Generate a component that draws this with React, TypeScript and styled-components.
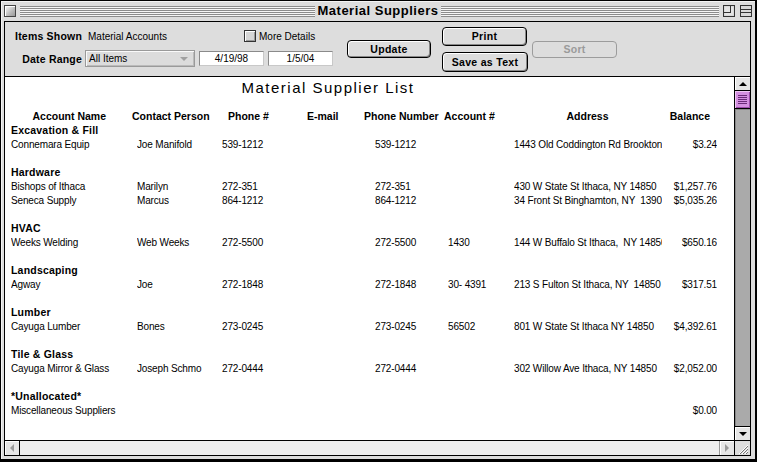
import React from 'react'
import styled, {createGlobalStyle} from 'styled-components'

const GlobalStyle = createGlobalStyle`
  html, body {
    margin: 0;
    padding: 0;
    background: #fff;
  }
  body {
    font-family: "Liberation Sans", Arial, sans-serif;
    color: #000;
  }
`

interface SupplierRow {
  name: string,
  contact: string,
  phone: string,
  email: string,
  phoneNumber: string,
  account: string,
  address: string,
  balance: string
}

interface SupplierGroup {
  title: string,
  rows: SupplierRow[]
}

const row = (name: string, contact: string, phone: string, account: string, address: string, balance: string): SupplierRow =>
  ({name, contact, phone, email: '', phoneNumber: phone, account, address, balance})

const groups: SupplierGroup[] = [
  {title: 'Excavation & Fill', rows: [
    row('Connemara Equip', 'Joe Manifold', '539-1212', '', '1443 Old Coddington Rd Brookton', '$3.24'),
  ]},
  {title: 'Hardware', rows: [
    row('Bishops of Ithaca', 'Marilyn', '272-351', '', '430 W State St Ithaca, NY 14850', '$1,257.76'),
    row('Seneca Supply', 'Marcus', '864-1212', '', '34 Front St Binghamton, NY  13901', '$5,035.26'),
  ]},
  {title: 'HVAC', rows: [
    row('Weeks Welding', 'Web Weeks', '272-5500', '1430', '144 W Buffalo St Ithaca,  NY 14850', '$650.16'),
  ]},
  {title: 'Landscaping', rows: [
    row('Agway', 'Joe', '272-1848', '30- 4391', '213 S Fulton St Ithaca, NY  14850', '$317.51'),
  ]},
  {title: 'Lumber', rows: [
    row('Cayuga Lumber', 'Bones', '273-0245', '56502', '801 W State St Ithaca NY 14850', '$4,392.61'),
  ]},
  {title: 'Tile & Glass', rows: [
    row('Cayuga Mirror & Glass', 'Joseph Schmo', '272-0444', '', '302 Willow Ave Ithaca, NY 14850', '$2,052.00'),
  ]},
  {title: '*Unallocated*', rows: [
    {name: 'Miscellaneous Suppliers', contact: '', phone: '', email: '', phoneNumber: '', account: '', address: '', balance: '$0.00'},
  ]},
]

/* ---------- window frame ---------- */

const Window = styled.div`
  width: 757px;
  height: 462px;
  box-sizing: border-box;
  border: 1px solid #000;
  border-right-width: 2px;
  border-bottom-width: 3px;
  background: #dddddd;
  box-shadow: inset 1px 1px 0 #f4f4f4;
  display: flex;
  flex-direction: column;
`

const TitleBar = styled.div`
  height: 20px;
  flex: none;
  display: grid;
  grid-template-columns: 1fr auto 1fr;
  align-items: center;
  padding: 0 3px;
`

const TitleSide = styled.div`
  display: flex;
  align-items: center;
  gap: 4px;
`

const Stripes = styled.div`
  flex: 1;
  height: 11px;
  background: repeating-linear-gradient(to bottom, #8c8c8c 0 1px, #f6f6f6 1px 2px);
`

const WindowTitle = styled.div`
  padding: 0 3px;
  font-size: 13px;
  font-weight: bold;
  letter-spacing: 0.5px;
  line-height: 20px;
  white-space: nowrap;
`

const CloseBox = styled.div`
  width: 12px;
  height: 12px;
  box-sizing: border-box;
  border: 1px solid #444;
  background: linear-gradient(135deg, #ffffff 0%, #bbbbbb 60%, #999 100%);
  box-shadow: inset 1px 1px 0 #fff;
  flex: none;
`

const TitleIcon = styled.svg`
  flex: none;
  display: block;
`

const Pane = styled.div`
  flex: 1;
  margin: 0 4px 3px 3px;
  border: 1px solid #000;
  display: flex;
  flex-direction: column;
  min-height: 0;
`

/* ---------- toolbar ---------- */

const Toolbar = styled.div`
  height: 54px;
  flex: none;
  border-bottom: 1px solid #000;
  background: #dddddd;
  display: flex;
  align-items: center;
`

const Form = styled.div`
  align-self: flex-start;
  padding-top: 7px;
  display: grid;
  grid-template-columns: 77px auto;
  grid-template-rows: 14px 17px;
  column-gap: 3px;
  row-gap: 7px;
  align-items: center;
`

const FieldLabel = styled.div`
  text-align: right;
  font-size: 10.5px;
  font-weight: bold;
  letter-spacing: 0.2px;
  white-space: nowrap;
`

const FieldLine = styled.div`
  display: flex;
  align-items: center;
  font-size: 10px;
`

const FieldValue = styled.span`
  width: 156px;
  padding-left: 3px;
  white-space: nowrap;
`

const Check = styled.span`
  width: 12px;
  height: 12px;
  box-sizing: border-box;
  border: 1px solid #333;
  background: #d6d6d6;
  box-shadow: inset 1px 1px 0 #fff, inset -1px -1px 0 #999;
  margin-right: 3px;
`

const Popup = styled.div`
  width: 110px;
  height: 17px;
  box-sizing: border-box;
  border: 1px solid #9a9a9a;
  background: #dcdcdc;
  box-shadow: inset 1px 1px 0 #fafafa, inset -1px -1px 0 #bbb;
  display: flex;
  align-items: center;
  justify-content: space-between;
  padding: 0 6px 0 3px;
`

const PopupArrow = styled.span`
  width: 0;
  height: 0;
  border-left: 4px solid transparent;
  border-right: 4px solid transparent;
  border-top: 4px solid #a0a0a0;
`

const DateField = styled.div`
  width: 65px;
  height: 15px;
  box-sizing: border-box;
  margin-left: 4px;
  background: #fff;
  border: 1px solid #8a8a8a;
  border-right-color: #c8c8c8;
  border-bottom-color: #c8c8c8;
  text-align: center;
  line-height: 13px;
`

const ButtonStack = styled.div`
  display: flex;
  flex-direction: column;
  gap: 6px;
  margin-left: 11px;
`

const PushButton = styled.div<{$width: number, $height: number, $gap?: number, $disabled?: boolean}>`
  width: ${p => p.$width}px;
  height: ${p => p.$height}px;
  margin-left: ${p => p.$gap || 0}px;
  box-sizing: border-box;
  border: 1px solid ${p => p.$disabled ? '#9c9c9c' : '#000'};
  border-radius: 4px;
  background: #dddddd;
  box-shadow: ${p => p.$disabled ? 'none' : 'inset 1px 1px 0 #fff, inset -1px -1px 0 #888'};
  color: ${p => p.$disabled ? '#9a9a9a' : '#000'};
  font-size: 10.5px;
  font-weight: bold;
  letter-spacing: 0.3px;
  display: flex;
  align-items: center;
  justify-content: center;
`

/* ---------- report ---------- */

const ContentRow = styled.div`
  flex: 1;
  display: flex;
  min-height: 0;
`

const ScrollView = styled.div`
  flex: 1;
  background: #fff;
  overflow: hidden;
  padding-left: 6px;
`

const ReportTitle = styled.div`
  width: 634px;
  margin-top: 1px;
  margin-bottom: 11px;
  text-align: center;
  font-size: 15px;
  letter-spacing: 1.5px;
  line-height: 20px;
`

const HeaderRow = styled.div`
  display: grid;
  grid-template-columns: 121px 96px 79px 57px 80px 69px 149px 55px;
  height: 14px;
  line-height: 14px;
  font-size: 10.5px;
  font-weight: bold;
  white-space: nowrap;
`

const HeadCell = styled.div<{$align?: 'left' | 'center' | 'right', $pad?: number}>`
  text-align: ${p => p.$align || 'left'};
  padding-right: ${p => p.$pad || 0}px;
`

const GroupTitle = styled.div<{$spaced: boolean}>`
  height: 14px;
  line-height: 14px;
  margin-top: ${p => p.$spaced ? 14 : 0}px;
  font-size: 10.5px;
  font-weight: bold;
  letter-spacing: 0.2px;
  white-space: nowrap;
`

const DataRow = styled.div`
  display: grid;
  grid-template-columns: 126px 85px 153px 73px 66px 148px 55px;
  height: 14px;
  box-sizing: border-box;
  padding-top: 1px;
  line-height: 14px;
  font-size: 10px;
  letter-spacing: -0.15px;
`

const Cell = styled.div<{$right?: boolean}>`
  overflow: hidden;
  white-space: pre;
  text-align: ${p => p.$right ? 'right' : 'left'};
`

/* ---------- scroll bars ---------- */

const VScroll = styled.div`
  width: 15px;
  flex: none;
  border-left: 1px solid #000;
  display: flex;
  flex-direction: column;
  background: #aaaaaa;
`

const ArrowBox = styled.div<{$edge: 'top' | 'bottom' | 'left' | 'right', $dim?: boolean}>`
  flex: none;
  width: ${p => p.$edge === 'top' || p.$edge === 'bottom' ? '15px' : '14px'};
  height: ${p => p.$edge === 'top' || p.$edge === 'bottom' ? '13px' : '14px'};
  background: #e6e6e6;
  box-shadow: inset 1px 1px 0 #fff;
  ${p => p.$edge === 'top' && 'border-bottom: 1px solid #000;'}
  ${p => p.$edge === 'bottom' && 'border-top: 1px solid #000;'}
  ${p => p.$edge === 'left' && 'border-right: 1px solid #000;'}
  ${p => p.$edge === 'right' && 'border-left: 1px solid #999;'}
  display: flex;
  align-items: center;
  justify-content: center;
  color: ${p => p.$dim ? '#9a9a9a' : '#000'};
`

const Thumb = styled.div`
  flex: none;
  height: 17px;
  border-bottom: 1px solid #000;
  background: #d490e0;
  box-shadow: inset 1px 1px 0 #f0c8f4, inset -1px -1px 0 #9a4aa8;
  display: flex;
  align-items: center;
  justify-content: center;
`

const Track = styled.div`
  flex: 1;
  box-shadow: inset 1px 1px 0 #888;
`

const HScroll = styled.div`
  height: 14px;
  flex: none;
  border-top: 1px solid #000;
  display: flex;
  background: #eeeeee;
`

const HTrack = styled.div`
  flex: 1;
`

const GrowBox = styled.div`
  width: 15px;
  flex: none;
  border-left: 1px solid #000;
  background: #dddddd;
  display: flex;
  align-items: center;
  justify-content: center;
`

const Triangle = ({dir}: {dir: 'up' | 'down' | 'left' | 'right'}) => {
  const pts = {
    up: '4,1 8,5 0,5',
    down: '0,1 8,1 4,5',
    left: '5,0 5,8 1,4',
    right: '1,0 1,8 5,4',
  }[dir]
  const vertical = dir === 'up' || dir === 'down'
  return (
    <svg width={vertical ? 8 : 6} height={vertical ? 6 : 8} viewBox={vertical ? '0 0 8 6' : '0 0 6 8'}>
      <polygon points={pts} fill="currentColor" />
    </svg>
  )
}

const App: React.FC = () =>
  <>
    <GlobalStyle />
    <Window>
      <TitleBar>
        <TitleSide>
          <CloseBox />
          <Stripes />
        </TitleSide>
        <WindowTitle>Material Suppliers</WindowTitle>
        <TitleSide>
          <Stripes />
          <TitleIcon width="12" height="12" viewBox="0 0 12 12">
            <rect x="0.5" y="0.5" width="11" height="11" fill="#cfcfcf" stroke="#333" />
            <rect x="1.5" y="1.5" width="9" height="9" fill="#e4e4e4" />
            <rect x="0.5" y="0.5" width="7" height="7" fill="none" stroke="#333" />
          </TitleIcon>
          <TitleIcon width="12" height="12" viewBox="0 0 12 12" style={{marginLeft: 1}}>
            <rect x="0.5" y="0.5" width="11" height="11" fill="#d8d8d8" stroke="#333" />
            <line x1="1" y1="4.5" x2="11" y2="4.5" stroke="#333" />
            <line x1="1" y1="7.5" x2="11" y2="7.5" stroke="#333" />
          </TitleIcon>
        </TitleSide>
      </TitleBar>

      <Pane>
        <Toolbar>
          <Form>
            <FieldLabel>Items Shown</FieldLabel>
            <FieldLine>
              <FieldValue>Material Accounts</FieldValue>
              <Check />
              More Details
            </FieldLine>
            <FieldLabel>Date Range</FieldLabel>
            <FieldLine>
              <Popup>All Items<PopupArrow /></Popup>
              <DateField>4/19/98</DateField>
              <DateField>1/5/04</DateField>
            </FieldLine>
          </Form>
          <PushButton $width={84} $height={18} $gap={14}>Update</PushButton>
          <ButtonStack>
            <PushButton $width={85} $height={19}>Print</PushButton>
            <PushButton $width={86} $height={20}>Save as Text</PushButton>
          </ButtonStack>
          <PushButton $width={85} $height={17} $gap={4} $disabled>Sort</PushButton>
        </Toolbar>

        <ContentRow>
          <ScrollView>
            <ReportTitle>Material Supplier List</ReportTitle>
            <HeaderRow>
              <HeadCell $align="right" $pad={26}>Account Name</HeadCell>
              <HeadCell>Contact Person</HeadCell>
              <HeadCell>Phone #</HeadCell>
              <HeadCell>E-mail</HeadCell>
              <HeadCell>Phone Number</HeadCell>
              <HeadCell>Account #</HeadCell>
              <HeadCell $align="center">Address</HeadCell>
              <HeadCell $align="right" $pad={7}>Balance</HeadCell>
            </HeaderRow>
            {groups.map((g, i) =>
              <React.Fragment key={g.title}>
                <GroupTitle $spaced={i > 0}>{g.title}</GroupTitle>
                {g.rows.map(r =>
                  <DataRow key={r.name}>
                    <Cell>{r.name}</Cell>
                    <Cell>{r.contact}</Cell>
                    <Cell>{r.phone}</Cell>
                    <Cell>{r.phoneNumber}</Cell>
                    <Cell>{r.account}</Cell>
                    <Cell>{r.address}</Cell>
                    <Cell $right>{r.balance}</Cell>
                  </DataRow>
                )}
              </React.Fragment>
            )}
          </ScrollView>
          <VScroll>
            <ArrowBox $edge="top"><Triangle dir="up" /></ArrowBox>
            <Thumb>
              <svg width="9" height="9" viewBox="0 0 9 9">
                {[0.5, 2.5, 4.5, 6.5, 8.5].map(y =>
                  <line key={y} x1="0" y1={y} x2="9" y2={y} stroke="#6a2a78" />
                )}
              </svg>
            </Thumb>
            <Track />
            <ArrowBox $edge="bottom"><Triangle dir="down" /></ArrowBox>
          </VScroll>
        </ContentRow>

        <HScroll>
          <ArrowBox $edge="left" $dim><Triangle dir="left" /></ArrowBox>
          <HTrack />
          <ArrowBox $edge="right" $dim><Triangle dir="right" /></ArrowBox>
          <GrowBox>
            <svg width="11" height="11" viewBox="0 0 11 11">
              {[2, 5, 8].map(o =>
                <React.Fragment key={o}>
                  <line x1={o} y1="11" x2="11" y2={o} stroke="#fff" />
                  <line x1={o + 1} y1="11" x2="11" y2={o + 1} stroke="#777" />
                </React.Fragment>
              )}
            </svg>
          </GrowBox>
        </HScroll>
      </Pane>
    </Window>
  </>

export default App
